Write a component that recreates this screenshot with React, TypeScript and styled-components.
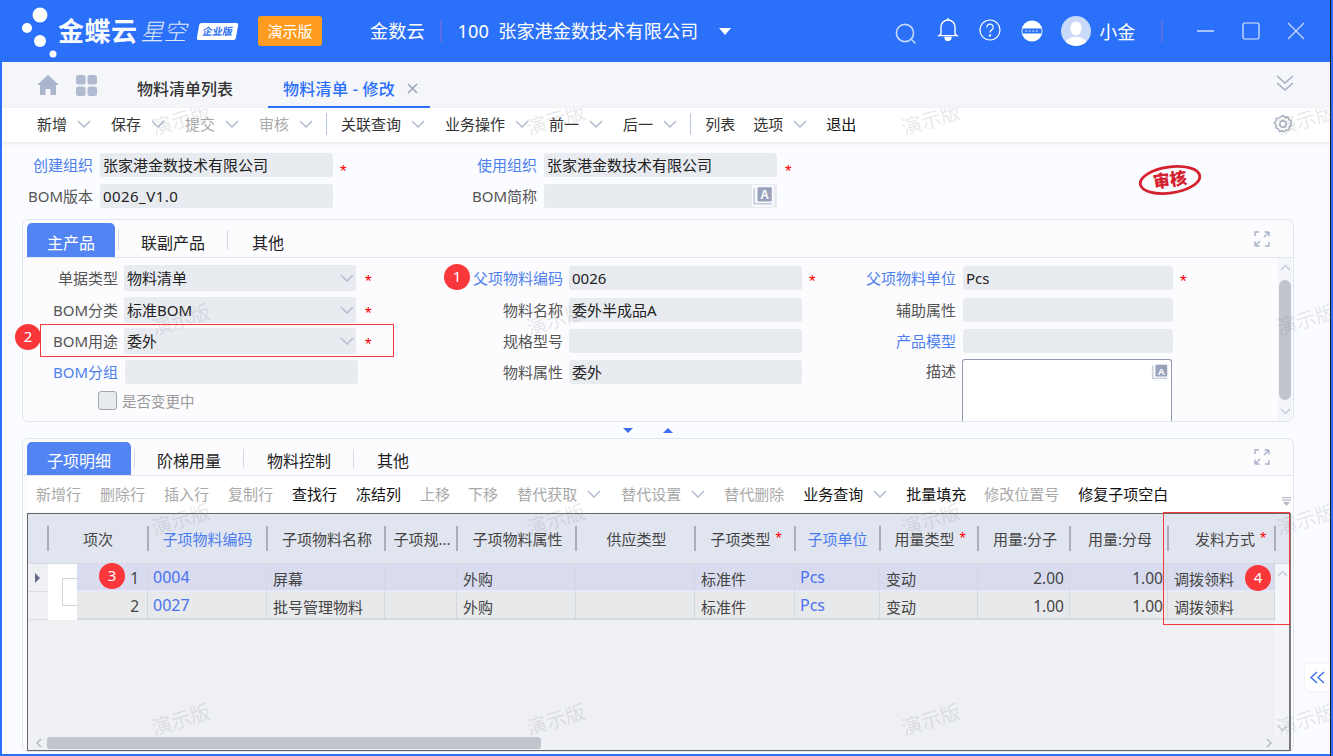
import React from 'react';
import styled, { createGlobalStyle } from 'styled-components';

const GlobalStyle = createGlobalStyle`
  html, body {
    margin: 0;
    padding: 0;
    background: #2b70f8;
  }
  body {
    font-family: "Noto Sans", "Noto Sans CJK SC", sans-serif;
    color: #333;
  }
  * { box-sizing: border-box; }
`;

const Page = styled.div`
  position: relative;
  width: 1333px;
  height: 756px;
  overflow: hidden;
  background: #2b70f8;
  padding: 0 2px 2px 2px;
  display: flex;
  flex-direction: column;
  &::after {
    content: '';
    position: absolute;
    top: 0;
    bottom: 0;
    left: 1330px;
    width: 1px;
    background: #1a1a22;
  }
`;

/* top blue bar */
const TopBar = styled.header`
  height: 62px;
  flex: none;
  display: flex;
  align-items: center;
  color: #fff;
`;

const LogoArea = styled.div`
  display: flex;
  align-items: center;
  width: 238px;
  margin-left: 18px;
`;

const LogoMain = styled.span`
  font-size: 26px;
  font-weight: 700;
  letter-spacing: 0.5px;
  opacity: 0.96;
  line-height: 30px;
`;

const LogoSub = styled.span`
  font-size: 23px;
  font-weight: 300;
  font-style: italic;
  margin-left: 3px;
  opacity: 0.85;
  line-height: 30px;
`;

const EditionTag = styled.span`
  font-size: 10px;
  font-weight: 700;
  color: #2b70f8;
  background: #fff;
  width: 39px;
  height: 17px;
  margin-left: 11px;
  line-height: 17px;
  text-align: center;
  border-radius: 2px;
  transform: skewX(-10deg);
`;

const DemoButton = styled.div`
  width: 64px;
  height: 30px;
  background: #ff9b1f;
  border-radius: 3px;
  font-size: 15px;
  line-height: 30px;
  text-align: center;
`;

const OrgText = styled.span`
  font-size: 18.2px;
  line-height: 24px;
  white-space: pre;
  margin-left: ${p => p.$left}px;
`;

const BarDivider = styled.span`
  width: 2px;
  height: 22px;
  background: #5a6ee8;
  margin-left: ${p => p.$left}px;
`;

const CaretDown = styled.span`
  width: 0;
  height: 0;
  margin-left: 21px;
  border-left: 6px solid transparent;
  border-right: 6px solid transparent;
  border-top: 7px solid #fff;
`;

const BarIcon = styled.svg`
  flex: none;
  margin-left: ${p => p.$left}px;
  margin-top: ${p => p.$top || 0}px;
`;

const UserName = styled.span`
  font-size: 18px;
  margin-left: 8px;
`;

/* tab strip */
const TabStrip = styled.nav`
  height: 46px;
  flex: none;
  display: flex;
  align-items: center;
  background: #f5f6fa;
  padding-left: 35px;
`;

const StripIcon = styled.svg`
  flex: none;
  margin-right: ${p => p.$right}px;
`;

const ListTab = styled.span`
  font-size: 16px;
  font-weight: 500;
  color: #333;
  margin: 6px 0 0 40px;
  width: 131px;
`;

const ActiveTab = styled.div`
  height: 46px;
  width: 162px;
  display: flex;
  align-items: center;
  padding: 8px 0 0 15px;
  font-size: 16px;
  font-weight: 500;
  letter-spacing: 0.3px;
  color: #2b70f8;
  border-bottom: 2px solid #2b70f8;
  white-space: pre;
`;

const TabClose = styled.svg`
  margin-left: 12px;
`;

/* main toolbar */
const ToolBar = styled.div`
  height: 34px;
  flex: none;
  display: flex;
  align-items: center;
  background: #fff;
  padding: 0 0 2px 35px;
  box-shadow: 0 1px 3px rgba(90, 100, 130, 0.18);
  position: relative;
`;

const ToolItem = styled.span`
  display: flex;
  align-items: center;
  font-size: 15px;
  line-height: 20px;
  white-space: nowrap;
  margin-right: ${p => (p.$gap === undefined ? 19 : p.$gap)}px;
  color: ${p => (p.$off ? '#a9a9a9' : p.$dark ? '#111' : '#333')};
`;

const ToolSep = styled.span`
  width: 1px;
  height: 22px;
  background: #b9c7dd;
  margin: 0 14px 0 -7px;
`;

const GearIcon = styled.svg`
  position: absolute;
  right: 38px;
  top: 6px;
`;

const Content = styled.main`
  flex: 1;
  min-height: 0;
  background: #fbfcff;
  padding: 11px 0 0 20px;
  width: 1328px;
`;

/* org fields above the panels */
const TopForm = styled.section`
  display: grid;
  grid-template-columns: 91px 233px 211px 233px 30px 300px;
  grid-auto-rows: 24px;
  row-gap: 7px;
  margin-left: -13px;
  margin-bottom: 11px;
`;

const Label = styled.label`
  font-size: 15px;
  line-height: 24px;
  text-align: right;
  white-space: nowrap;
  padding-right: ${p => p.$pad || 0}px;
  color: ${p => (p.$link ? '#4d7fee' : '#555')};
`;

const StarredLabel = styled.div`
  display: flex;
  justify-content: space-between;
`;

const Input = styled.div`
  position: relative;
  height: ${p => p.$h || 24}px;
  width: ${p => (p.$w ? `${p.$w}px` : 'auto')};
  flex: none;
  background: #e8ebf0;
  border-radius: 3px;
  font-size: 15px;
  letter-spacing: ${p => (p.$latin ? 0.45 : 0)}px;
  line-height: ${p => p.$h || 24}px;
  padding-left: 3px;
  color: #222;
`;

const Star = styled.span`
  color: #f00;
  font-family: "Liberation Sans", sans-serif;
  font-size: 17px;
  line-height: 24px;
  padding-top: 7px;
  margin-left: ${p => p.$left}px;
`;

const LangIcon = styled.svg`
  position: absolute;
  right: ${p => p.$right}px;
  top: ${p => p.$top}px;
`;

const StampCell = styled.div`
  grid-row: 1 / span 2;
  grid-column: 6;
  margin: 11px 0 0 331px;
`;

const Panel = styled.section`
  border: 1px solid #e1e5ef;
  border-radius: 6px;
  background: #fcfcfe;
  width: 1272px;
  height: ${p => (p.$h ? `${p.$h}px` : 'auto')};
`;

const PanelTabs = styled.div`
  height: ${p => p.$h}px;
  padding: 3px 0 0 4px;
  display: flex;
  align-items: flex-end;
  border-bottom: 1px solid #e1e5ef;
`;

const PanelTab = styled.div`
  height: ${p => p.$h}px;
  width: ${p => p.$w}px;
  flex: none;
  font-size: 16px;
  text-align: center;
  padding-top: ${p => p.$h - 26}px;
  line-height: 24px;
  color: ${p => (p.$active ? '#fff' : '#222')};
  background: ${p => (p.$active ? '#5384f3' : 'transparent')};
  border-radius: 5px 5px 0 0;
  position: relative;
  &::after {
    content: ${p => (p.$last ? 'none' : "''")};
    position: absolute;
    right: ${p => (p.$active ? -4 : 0)}px;
    top: 7px;
    bottom: 7px;
    width: 1px;
    background: #d4dbe8;
  }
`;

const ExpandIcon = styled.svg`
  margin: 0 23px 10px auto;
  align-self: flex-end;
`;

const PanelBody = styled.div`
  display: flex;
  height: 163px;
`;

const FieldGrid = styled.div`
  flex: 1;
  display: grid;
  grid-template-columns: 420px 393px 1fr;
  grid-template-rows: 32px 32px 30px 32px 24px;
  padding-top: 4px;
  align-items: center;
`;

const Field = styled.div`
  display: flex;
  align-items: ${p => (p.$tall ? 'flex-start' : 'center')};
  grid-column: ${p => p.$col};
  grid-row: ${p => p.$row};
  align-self: ${p => (p.$tall ? 'start' : 'center')};
`;

const FieldLabel = styled(Label)`
  flex: none;
  width: ${p => p.$w}px;
  margin-right: ${p => p.$gap || 6}px;
  padding-top: ${p => (p.$tall ? 3 : 0)}px;
`;

const SelectBox = styled(Input)`
  display: flex;
  align-items: center;
  justify-content: space-between;
  padding-right: 2px;
`;

const TextArea = styled.div`
  position: relative;
  width: 210px;
  height: 62px;
  margin-top: 3px;
  background: #fff;
  border: 1px solid #8f99b3;
  border-bottom: none;
  border-radius: 3px 3px 0 0;
`;

const CheckRow = styled.div`
  grid-column: 1;
  grid-row: 5;
  display: flex;
  align-items: center;
  padding-left: 75px;
  font-size: 14.5px;
  color: #999;
`;

const CheckBox = styled.span`
  width: 19px;
  height: 19px;
  background: #e8ebf0;
  border: 1px solid #a3a7ad;
  border-radius: 3px;
  margin-right: 5px;
`;

const ScrollColumn = styled.div`
  width: 14px;
  flex: none;
  display: flex;
  flex-direction: column;
  align-items: center;
  justify-content: space-between;
  background: ${p => p.$bg || '#f3f5fa'};
  padding: ${p => p.$pad || '6px 0'};
  margin-right: ${p => p.$right || 0}px;
`;

const ScrollThumb = styled.div`
  width: 12px;
  height: 120px;
  background: #c0c5ce;
  border-radius: 6px;
  margin: auto 0;
`;

const Splitter = styled.div`
  height: 16px;
  width: 1272px;
  display: flex;
  align-items: center;
  gap: 30px;
  padding-left: 601px;
`;

const Triangle = styled.span`
  width: 0;
  height: 0;
  border-left: 5px solid transparent;
  border-right: 5px solid transparent;
  border-top: ${p => (p.$up ? 'none' : '5px solid #3d6ff0')};
  border-bottom: ${p => (p.$up ? '5px solid #3d6ff0' : 'none')};
`;

const GridToolBar = styled.div`
  height: 36px;
  display: flex;
  align-items: center;
  background: #fff;
  margin-left: 4px;
  padding-left: 9px;
  position: relative;
`;

const SortIcon = styled.svg`
  position: absolute;
  right: 2px;
  top: 21px;
`;

/* detail table */
const Table = styled.div`
  margin: 1px 0 0 4px;
  width: 1264px;
  height: 238px;
  background: #eff0f3;
  border: 1px solid #666;
  border-right: 2px solid #77797f;
  display: flex;
  flex-direction: column;
`;

const Columns = '20px 29px 71px 119px 118px 72px 119px 119px 100px 85px 98px 92px 98px 107px';

const HeaderRow = styled.div`
  display: grid;
  grid-template-columns: ${Columns};
  height: 50px;
  flex: none;
  background: #e1e5ef;
  border-bottom: 1px solid #d6dae5;
  padding-right: 14px;
`;

const HeaderCell = styled.div`
  position: relative;
  grid-column: ${p => p.$span || 'auto'};
  display: flex;
  align-items: center;
  justify-content: center;
  font-size: 15px;
  white-space: nowrap;
  padding-left: ${p => (p.$pad === undefined ? 2 : p.$pad)}px;
  color: ${p => (p.$link ? '#4a7cf0' : '#444')};
  &::after {
    content: '';
    position: absolute;
    right: -1px;
    top: 12px;
    height: 25px;
    width: 2px;
    background: #a9adb8;
  }
`;

const HeaderStar = styled.span`
  color: #f00;
  font-family: "Liberation Sans", sans-serif;
  font-size: 16px;
  margin-left: 5px;
`;

const TableMiddle = styled.div`
  flex: 1;
  min-height: 0;
  display: flex;
`;

const BodyGrid = styled.div`
  flex: 1;
  display: grid;
  grid-template-columns: ${Columns};
  grid-auto-rows: 28px;
  align-content: start;
`;

const GutterCell = styled.div`
  display: flex;
  align-items: center;
  padding-left: 7px;
  border-bottom: 1px solid #dcdee3;
`;

const RowMarker = styled.span`
  width: 0;
  height: 0;
  border-top: 5px solid transparent;
  border-bottom: 5px solid transparent;
  border-left: 5px solid #67678a;
`;

const FrozenCell = styled.div`
  grid-column: 2;
  grid-row: 1 / span 2;
  background: #fff;
  padding: 14px 0 14px 14px;
`;

const FrozenBox = styled.div`
  height: 100%;
  border: 1px solid #d0d3d8;
  border-right: none;
`;

const Cell = styled.div`
  font-size: ${p => (p.$num ? 15.5 : p.$link ? 16 : 15)}px;
  line-height: 26px;
  padding: ${p => (p.$num ? '1px 5px 0 0' : p.$link ? '0 0 0 5px' : '2px 0 0 6px')};
  text-align: ${p => (p.$num ? 'right' : 'left')};
  white-space: nowrap;
  background: ${p => (p.$first ? '#d8dcee' : '#e8e9eb')};
  border-right: 1px solid #d4d7de;
  border-bottom: ${p => (p.$first ? '2px solid #e6e9f6' : '2px solid #d5d8dc')};
  color: ${p => (p.$link ? '#4a72f0' : '#444')};
`;

const HScroll = styled.div`
  height: 14px;
  flex: none;
  display: flex;
  align-items: center;
  padding: 0 17px 0 8px;
  justify-content: space-between;
`;

const HThumb = styled.div`
  width: 494px;
  height: 12px;
  background: #c0c5ce;
  border-radius: 3px;
  margin-left: 5px;
  margin-right: auto;
`;

/* things lying over the page */
const WatermarkLayer = styled.div`
  position: absolute;
  left: 151px;
  top: 108px;
  width: 1180px;
  height: 646px;
  overflow: hidden;
  display: grid;
  grid-template-columns: repeat(4, 375px);
  grid-auto-rows: 200px;
  pointer-events: none;
  z-index: 3;
`;

const Watermark = styled.span`
  font-size: 20px;
  line-height: 24px;
  height: 24px;
  width: 60px;
  white-space: nowrap;
  color: rgba(110, 115, 130, 0.17);
  transform: rotate(-17deg);
  visibility: ${p => (p.$hide ? 'hidden' : 'visible')};
`;

const Highlight = styled.div`
  position: absolute;
  left: ${p => p.$x}px;
  top: ${p => p.$y}px;
  width: ${p => p.$w}px;
  height: ${p => p.$h}px;
  border: 1px solid #f5383b;
  z-index: 4;
`;

const Callout = styled.div`
  position: absolute;
  left: ${p => p.$x - 13}px;
  top: ${p => p.$y - 13}px;
  width: 26px;
  height: 26px;
  border-radius: 50%;
  background: #f9363a;
  color: #fff;
  font-size: 15px;
  line-height: 24px;
  text-align: center;
  z-index: 5;
`;

const CollapseTab = styled.div`
  position: absolute;
  left: 1305px;
  top: 664px;
  width: 25px;
  height: 27px;
  background: #fff;
  border-radius: 4px 0 0 4px;
  display: flex;
  align-items: center;
  justify-content: center;
  box-shadow: 0 0 3px rgba(100, 110, 140, 0.15);
  z-index: 4;
`;

const Chevron = ({ color = '#b4bfd2', size = 14 }: { color?: string; size?: number }) => (
  <svg width={size} height={8} viewBox="0 0 14 8" fill="none" style={{ flex: 'none' }}>
    <path d="M1 1l6 6 6-6" stroke={color} strokeWidth="1.6" />
  </svg>
);

const ChevronUp = ({ color = '#c8ccd4' }: { color?: string }) => (
  <svg width={11} height={7} viewBox="0 0 11 7" fill="none">
    <path d="M1 6l4.5-4.5L10 6" stroke={color} strokeWidth="1.5" />
  </svg>
);

const ChevronDown = ({ color = '#c8ccd4' }: { color?: string }) => (
  <svg width={11} height={7} viewBox="0 0 11 7" fill="none">
    <path d="M1 1l4.5 4.5L10 1" stroke={color} strokeWidth="1.5" />
  </svg>
);

const Drop = ({ label, off, gap, dark }: { label: string; off?: boolean; gap?: number; dark?: boolean }) => (
  <ToolItem $off={off} $gap={gap === undefined ? 20 : gap} $dark={dark}>
    {label}
    <span style={{ display: 'inline-flex', marginLeft: 10 }}>
      <Chevron />
    </span>
  </ToolItem>
);

const Lang = ({ right, top, size }: { right: number; top: number; size: number }) => (
  <LangIcon $right={right} $top={top} width={size} height={size} viewBox="0 0 20 20">
    <rect x="0" y="0" width="20" height="20" fill="#f8f9fc" />
    <path d="M2 3v14h16" fill="none" stroke="#c4cad8" strokeWidth="1.4" />
    <rect x="5" y="2" width="13" height="13" rx="1" fill="#98a3bb" />
    <text x="11.5" y="13" fontSize="11" fontWeight="700" fill="#fff" textAnchor="middle" fontFamily="Liberation Sans">A</text>
  </LangIcon>
);

const Expand = () => (
  <ExpandIcon width="16" height="16" viewBox="0 0 16 16" fill="none" stroke="#a8b2c8" strokeWidth="1.4">
    <path d="M1 5V1h4M15 11v4h-4" />
    <path d="M15 1L10 6M15 1v4.5M15 1h-4.5" />
    <path d="M1 15l5-5M1 15v-4.5M1 15h4.5" />
  </ExpandIcon>
);

const rows = [
  { no: '1', code: '0004', name: '屏幕', num: '2.00', tail: '调拨领料', first: true },
  { no: '2', code: '0027', name: '批号管理物料', num: '1.00', tail: '调拨领料', first: false },
];

const App: React.FC = () => {
  const marks = Array.from({ length: 16 }, (_, i) => i);
  return (
    <Page>
      <GlobalStyle />
      <TopBar>
        <LogoArea>
          <svg width="38" height="58" viewBox="0 0 38 58" style={{ flex: 'none' }}>
            <circle cx="20" cy="13" r="7.5" fill="#fff" />
            <circle cx="7" cy="26" r="5" fill="#fff" />
            <circle cx="20" cy="39" r="6" fill="#fff" />
            <circle cx="33" cy="52" r="3.5" fill="#fff" />
          </svg>
          <LogoMain>金蝶云</LogoMain>
          <LogoSub>星空</LogoSub>
          <EditionTag>企业版</EditionTag>
        </LogoArea>
        <DemoButton>演示版</DemoButton>
        <OrgText $left={48}>金数云</OrgText>
        <BarDivider $left={15} />
        <OrgText $left={16}>100  张家港金数技术有限公司</OrgText>
        <CaretDown />
        <BarIcon $left={163} $top={6} width="24" height="24" viewBox="0 0 24 24" fill="none" stroke="#c6d8fd" strokeWidth="1.6">
          <circle cx="11" cy="11" r="8.6" />
          <path d="M17.5 17.5l4 4" />
        </BarIcon>
        <BarIcon $left={19} $top={-4} width="22" height="24" viewBox="0 0 22 24" fill="none" stroke="#fff" strokeWidth="1.4">
          <path d="M4 17V10a7 7 0 0114 0v7l2 1.6H2z" />
          <path d="M11 1v2" />
          <path d="M8 20.5h6a3 3 0 01-6 0z" fill="#fff" />
        </BarIcon>
        <BarIcon $left={20} $top={-2} width="22" height="22" viewBox="0 0 22 22" fill="none" stroke="#fff" strokeWidth="1.2">
          <circle cx="11" cy="11" r="10" />
          <path d="M7.8 8.4a3.2 3.2 0 116 1.4c-.7 1-2.8 1.7-2.8 3.6" />
          <circle cx="11" cy="16.4" r=".6" fill="#fff" />
        </BarIcon>
        <BarIcon $left={20} $top={-1} width="22" height="22" viewBox="0 0 22 22">
          <circle cx="11" cy="11" r="10.5" fill="#fff" />
          <rect x="1.5" y="8.5" width="19" height="5" fill="#2b70f8" />
          <path d="M4 11h14" stroke="#a8c4fb" strokeWidth="1.6" strokeDasharray="2 1.6" />
        </BarIcon>
        <BarIcon $left={18} width="30" height="30" viewBox="0 0 30 30">
          <circle cx="15" cy="15" r="15" fill="#cbd9f8" />
          <clipPath id="avatarClip"><circle cx="15" cy="15" r="15" /></clipPath>
          <g clipPath="url(#avatarClip)" fill="#fff">
            <ellipse cx="15" cy="12.5" rx="5.6" ry="7" />
            <path d="M3 30c0-6 6-8 9-9h6c3 1 9 3 9 9z" />
          </g>
        </BarIcon>
        <UserName>小金</UserName>
        <BarDivider $left={26} />
        <BarIcon $left={34} width="17" height="4" viewBox="0 0 17 4">
          <path d="M0 2h17" stroke="#c6d8fd" strokeWidth="1.6" />
        </BarIcon>
        <BarIcon $left={28} width="18" height="18" viewBox="0 0 18 18" fill="none" stroke="#dfe9fe" strokeWidth="1.2">
          <rect x="1" y="1" width="16" height="16" rx="1.5" />
        </BarIcon>
        <BarIcon $left={27} width="18" height="18" viewBox="0 0 18 18" fill="none" stroke="#c6d8fd" strokeWidth="1.3">
          <path d="M1 1l16 16M17 1L1 17" />
        </BarIcon>
      </TopBar>

      <TabStrip>
        <StripIcon $right={17} width="22" height="20" viewBox="0 0 22 20" fill="#a9b5cc">
          <path d="M11 0L0 10h3v10h5.5v-6h5v6H19V10h3z" />
        </StripIcon>
        <StripIcon $right={0} width="21" height="21" viewBox="0 0 21 21" fill="#b0bbd1">
          <rect width="9.5" height="9.5" rx="2.5" />
          <rect x="11.5" width="9.5" height="9.5" rx="2.5" />
          <rect y="11.5" width="9.5" height="9.5" rx="2.5" />
          <rect x="11.5" y="11.5" width="9.5" height="9.5" rx="2.5" />
        </StripIcon>
        <ListTab>物料清单列表</ListTab>
        <ActiveTab>
          物料清单 - 修改
          <TabClose width="11" height="11" viewBox="0 0 11 11" fill="none" stroke="#9aa5ba" strokeWidth="1.6">
            <path d="M1 1l9 9M10 1l-9 9" />
          </TabClose>
        </ActiveTab>
        <svg width="18" height="17" viewBox="0 0 18 17" fill="none" stroke="#a3aec4" strokeWidth="1.5" style={{ marginLeft: 846, marginTop: -4 }}>
          <path d="M1 1l8 7 8-7M1 8l8 7 8-7" />
        </svg>
      </TabStrip>

      <ToolBar>
        <Drop label="新增" />
        <Drop label="保存" />
        <Drop label="提交" off />
        <Drop label="审核" off />
        <ToolSep />
        <Drop label="关联查询" />
        <Drop label="业务操作" />
        <Drop label="前一" />
        <Drop label="后一" />
        <ToolSep />
        <ToolItem $gap={18}>列表</ToolItem>
        <Drop label="选项" gap={19} />
        <ToolItem $dark>退出</ToolItem>
        <GearIcon width="20" height="20" viewBox="0 0 20 20" fill="none" stroke="#a9b2c2" strokeWidth="1.5">
          <path d="M10 1.5l2 1.9 2.7-.5 1 2.6 2.5 1.1-.6 2.7.9 1.9-2.1 1.8-.3 2.7-2.7.2-1.9 2-2.5-1.2-2.7.6-1.1-2.5-2.4-1.2.5-2.7L1.3 9l1.9-2 .1-2.7 2.7-.4z" />
          <circle cx="10" cy="10" r="3.2" />
        </GearIcon>
      </ToolBar>

      <Content>
        <TopForm>
          <Label $link $pad={7}>创建组织</Label>
          <Input>张家港金数技术有限公司</Input>
          <StarredLabel>
            <Star $left={7}>*</Star>
            <Label $link $pad={7}>使用组织</Label>
          </StarredLabel>
          <Input>张家港金数技术有限公司</Input>
          <Star $left={8}>*</Star>
          <Label $pad={7} style={{ gridColumn: 1 }}>BOM版本</Label>
          <Input $latin>0026_V1.0</Input>
          <Label $pad={7}>BOM简称</Label>
          <Input><Lang right={3} top={1} size={22} /></Input>
          <StampCell>
            <svg width="64" height="32" viewBox="0 0 64 32">
              <g transform="rotate(-8 32 16)">
                <ellipse cx="32" cy="16" rx="30" ry="13" fill="none" stroke="#d5202e" strokeWidth="2.8" />
                <text x="32" y="22" fontSize="17" fontWeight="900" fill="#d5202e" textAnchor="middle" fontFamily="Noto Sans CJK SC">审核</text>
              </g>
            </svg>
          </StampCell>
        </TopForm>

        <Panel $h={203}>
          <PanelTabs $h={38}>
            <PanelTab $active $h={34} $w={88}>主产品</PanelTab>
            <PanelTab $h={34} $w={110} style={{ marginLeft: 3 }}>联副产品</PanelTab>
            <PanelTab $last $h={34} $w={80}>其他</PanelTab>
            <Expand />
          </PanelTabs>
          <PanelBody>
            <FieldGrid>
              <Field $col={1} $row={1}>
                <FieldLabel $w={95}>单据类型</FieldLabel>
                <SelectBox $w={232} $h={26}>物料清单<Chevron /></SelectBox>
                <Star $left={9}>*</Star>
              </Field>
              <Field $col={1} $row={2}>
                <FieldLabel $w={95}>BOM分类</FieldLabel>
                <SelectBox $w={232} $h={26}>标准BOM<Chevron /></SelectBox>
                <Star $left={9}>*</Star>
              </Field>
              <Field $col={1} $row={3}>
                <FieldLabel $w={95}>BOM用途</FieldLabel>
                <SelectBox $w={232} $h={26}>委外<Chevron /></SelectBox>
                <Star $left={9}>*</Star>
              </Field>
              <Field $col={1} $row={4}>
                <FieldLabel $w={95} $gap={7} $link>BOM分组</FieldLabel>
                <Input $w={233} />
              </Field>
              <CheckRow><CheckBox />是否变更中</CheckRow>

              <Field $col={2} $row={1}>
                <FieldLabel $w={120} $link>父项物料编码</FieldLabel>
                <Input $w={233}>0026</Input>
                <Star $left={7}>*</Star>
              </Field>
              <Field $col={2} $row={2}>
                <FieldLabel $w={120}>物料名称</FieldLabel>
                <Input $w={233}>委外半成品A</Input>
              </Field>
              <Field $col={2} $row={3}>
                <FieldLabel $w={120}>规格型号</FieldLabel>
                <Input $w={233} />
              </Field>
              <Field $col={2} $row={4}>
                <FieldLabel $w={120}>物料属性</FieldLabel>
                <Input $w={233}>委外</Input>
              </Field>

              <Field $col={3} $row={1}>
                <FieldLabel $w={120} $gap={7} $link>父项物料单位</FieldLabel>
                <Input $w={210}>Pcs</Input>
                <Star $left={7}>*</Star>
              </Field>
              <Field $col={3} $row={2}>
                <FieldLabel $w={120} $gap={7}>辅助属性</FieldLabel>
                <Input $w={210} />
              </Field>
              <Field $col={3} $row={3}>
                <FieldLabel $w={120} $gap={7} $link>产品模型</FieldLabel>
                <Input $w={210} />
              </Field>
              <Field $col={3} $row="4 / span 2" $tall>
                <FieldLabel $w={120} $gap={6} $tall>描述</FieldLabel>
                <TextArea><Lang right={2} top={3} size={18} /></TextArea>
              </Field>
            </FieldGrid>
            <ScrollColumn $right={1}>
              <ChevronUp />
              <ScrollThumb />
              <ChevronDown />
            </ScrollColumn>
          </PanelBody>
        </Panel>

        <Splitter>
          <Triangle />
          <Triangle $up />
        </Splitter>

        <Panel>
          <PanelTabs $h={37}>
            <PanelTab $active $h={33} $w={104}>子项明细</PanelTab>
            <PanelTab $h={33} $w={110} style={{ marginLeft: 3 }}>阶梯用量</PanelTab>
            <PanelTab $h={33} $w={110}>物料控制</PanelTab>
            <PanelTab $last $h={33} $w={78}>其他</PanelTab>
            <Expand />
          </PanelTabs>
          <GridToolBar>
            <ToolItem $off>新增行</ToolItem>
            <ToolItem $off>删除行</ToolItem>
            <ToolItem $off>插入行</ToolItem>
            <ToolItem $off>复制行</ToolItem>
            <ToolItem $dark>查找行</ToolItem>
            <ToolItem $dark>冻结列</ToolItem>
            <ToolItem $off $gap={18}>上移</ToolItem>
            <ToolItem $off>下移</ToolItem>
            <Drop label="替代获取" off />
            <Drop label="替代设置" off gap={19} />
            <ToolItem $off>替代删除</ToolItem>
            <Drop label="业务查询" dark gap={19} />
            <ToolItem $dark $gap={18}>批量填充</ToolItem>
            <ToolItem $off>修改位置号</ToolItem>
            <ToolItem $dark>修复子项空白</ToolItem>
            <SortIcon width="9" height="9" viewBox="0 0 9 9" fill="#b6bac4">
              <path d="M0 0h9v1.2H0zM0 2.6h9v1.2H0zM1 5h7L4.5 9z" />
            </SortIcon>
          </GridToolBar>
          <Table>
            <HeaderRow>
              <HeaderCell $pad={0} />
              <HeaderCell $pad={0} $span="span 2">项次</HeaderCell>
              <HeaderCell $pad={0} $link>子项物料编码</HeaderCell>
              <HeaderCell>子项物料名称</HeaderCell>
              <HeaderCell>子项规...</HeaderCell>
              <HeaderCell>子项物料属性</HeaderCell>
              <HeaderCell>供应类型</HeaderCell>
              <HeaderCell>子项类型<HeaderStar>*</HeaderStar></HeaderCell>
              <HeaderCell $pad={0} $link>子项单位</HeaderCell>
              <HeaderCell>用量类型<HeaderStar>*</HeaderStar></HeaderCell>
              <HeaderCell>用量:分子</HeaderCell>
              <HeaderCell>用量:分母</HeaderCell>
              <HeaderCell $pad={18}>发料方式<HeaderStar>*</HeaderStar></HeaderCell>
            </HeaderRow>
            <TableMiddle>
              <BodyGrid>
                <FrozenCell><FrozenBox /></FrozenCell>
                {rows.map(r => (
                  <React.Fragment key={r.no}>
                    <GutterCell style={{ gridColumn: 1 }}>{r.first && <RowMarker />}</GutterCell>
                    <Cell $num $first={r.first} style={{ gridColumn: 3, paddingRight: 8 }}>{r.no}</Cell>
                    <Cell $link $first={r.first}>{r.code}</Cell>
                    <Cell $first={r.first}>{r.name}</Cell>
                    <Cell $first={r.first} />
                    <Cell $first={r.first}>外购</Cell>
                    <Cell $first={r.first} />
                    <Cell $first={r.first}>标准件</Cell>
                    <Cell $link $first={r.first}>Pcs</Cell>
                    <Cell $first={r.first}>变动</Cell>
                    <Cell $num $first={r.first}>{r.num}</Cell>
                    <Cell $num $first={r.first} style={{ paddingRight: 4 }}>1.00</Cell>
                    <Cell $first={r.first}>{r.tail}</Cell>
                  </React.Fragment>
                ))}
              </BodyGrid>
              <ScrollColumn $pad="6px 0 4px">
                <ChevronUp />
                <ChevronDown />
              </ScrollColumn>
            </TableMiddle>
            <HScroll>
              <svg width="6" height="10" viewBox="0 0 6 10" fill="none" stroke="#b4b8c0" strokeWidth="1.4">
                <path d="M5 1L1 5l4 4" />
              </svg>
              <HThumb />
              <svg width="6" height="10" viewBox="0 0 6 10" fill="none" stroke="#b4b8c0" strokeWidth="1.4">
                <path d="M1 1l4 4-4 4" />
              </svg>
            </HScroll>
          </Table>
        </Panel>
      </Content>

      <WatermarkLayer>
        {marks.map(i => (
          <Watermark key={i} $hide={i === 6}>演示版</Watermark>
        ))}
      </WatermarkLayer>

      <Highlight $x={40} $y={324} $w={354} $h={33} />
      <Highlight $x={1163} $y={512} $w={127} $h={113} />
      <Callout $x={457} $y={277}>1</Callout>
      <Callout $x={28} $y={337}>2</Callout>
      <Callout $x={112} $y={576}>3</Callout>
      <Callout $x={1258} $y={578}>4</Callout>
      <CollapseTab>
        <svg width="15" height="13" viewBox="0 0 15 13" fill="none" stroke="#3d6ff0" strokeWidth="1.4">
          <path d="M7 1L1 6.5 7 12M14 1L8 6.5 14 12" />
        </svg>
      </CollapseTab>
    </Page>
  );
};

export default App;
